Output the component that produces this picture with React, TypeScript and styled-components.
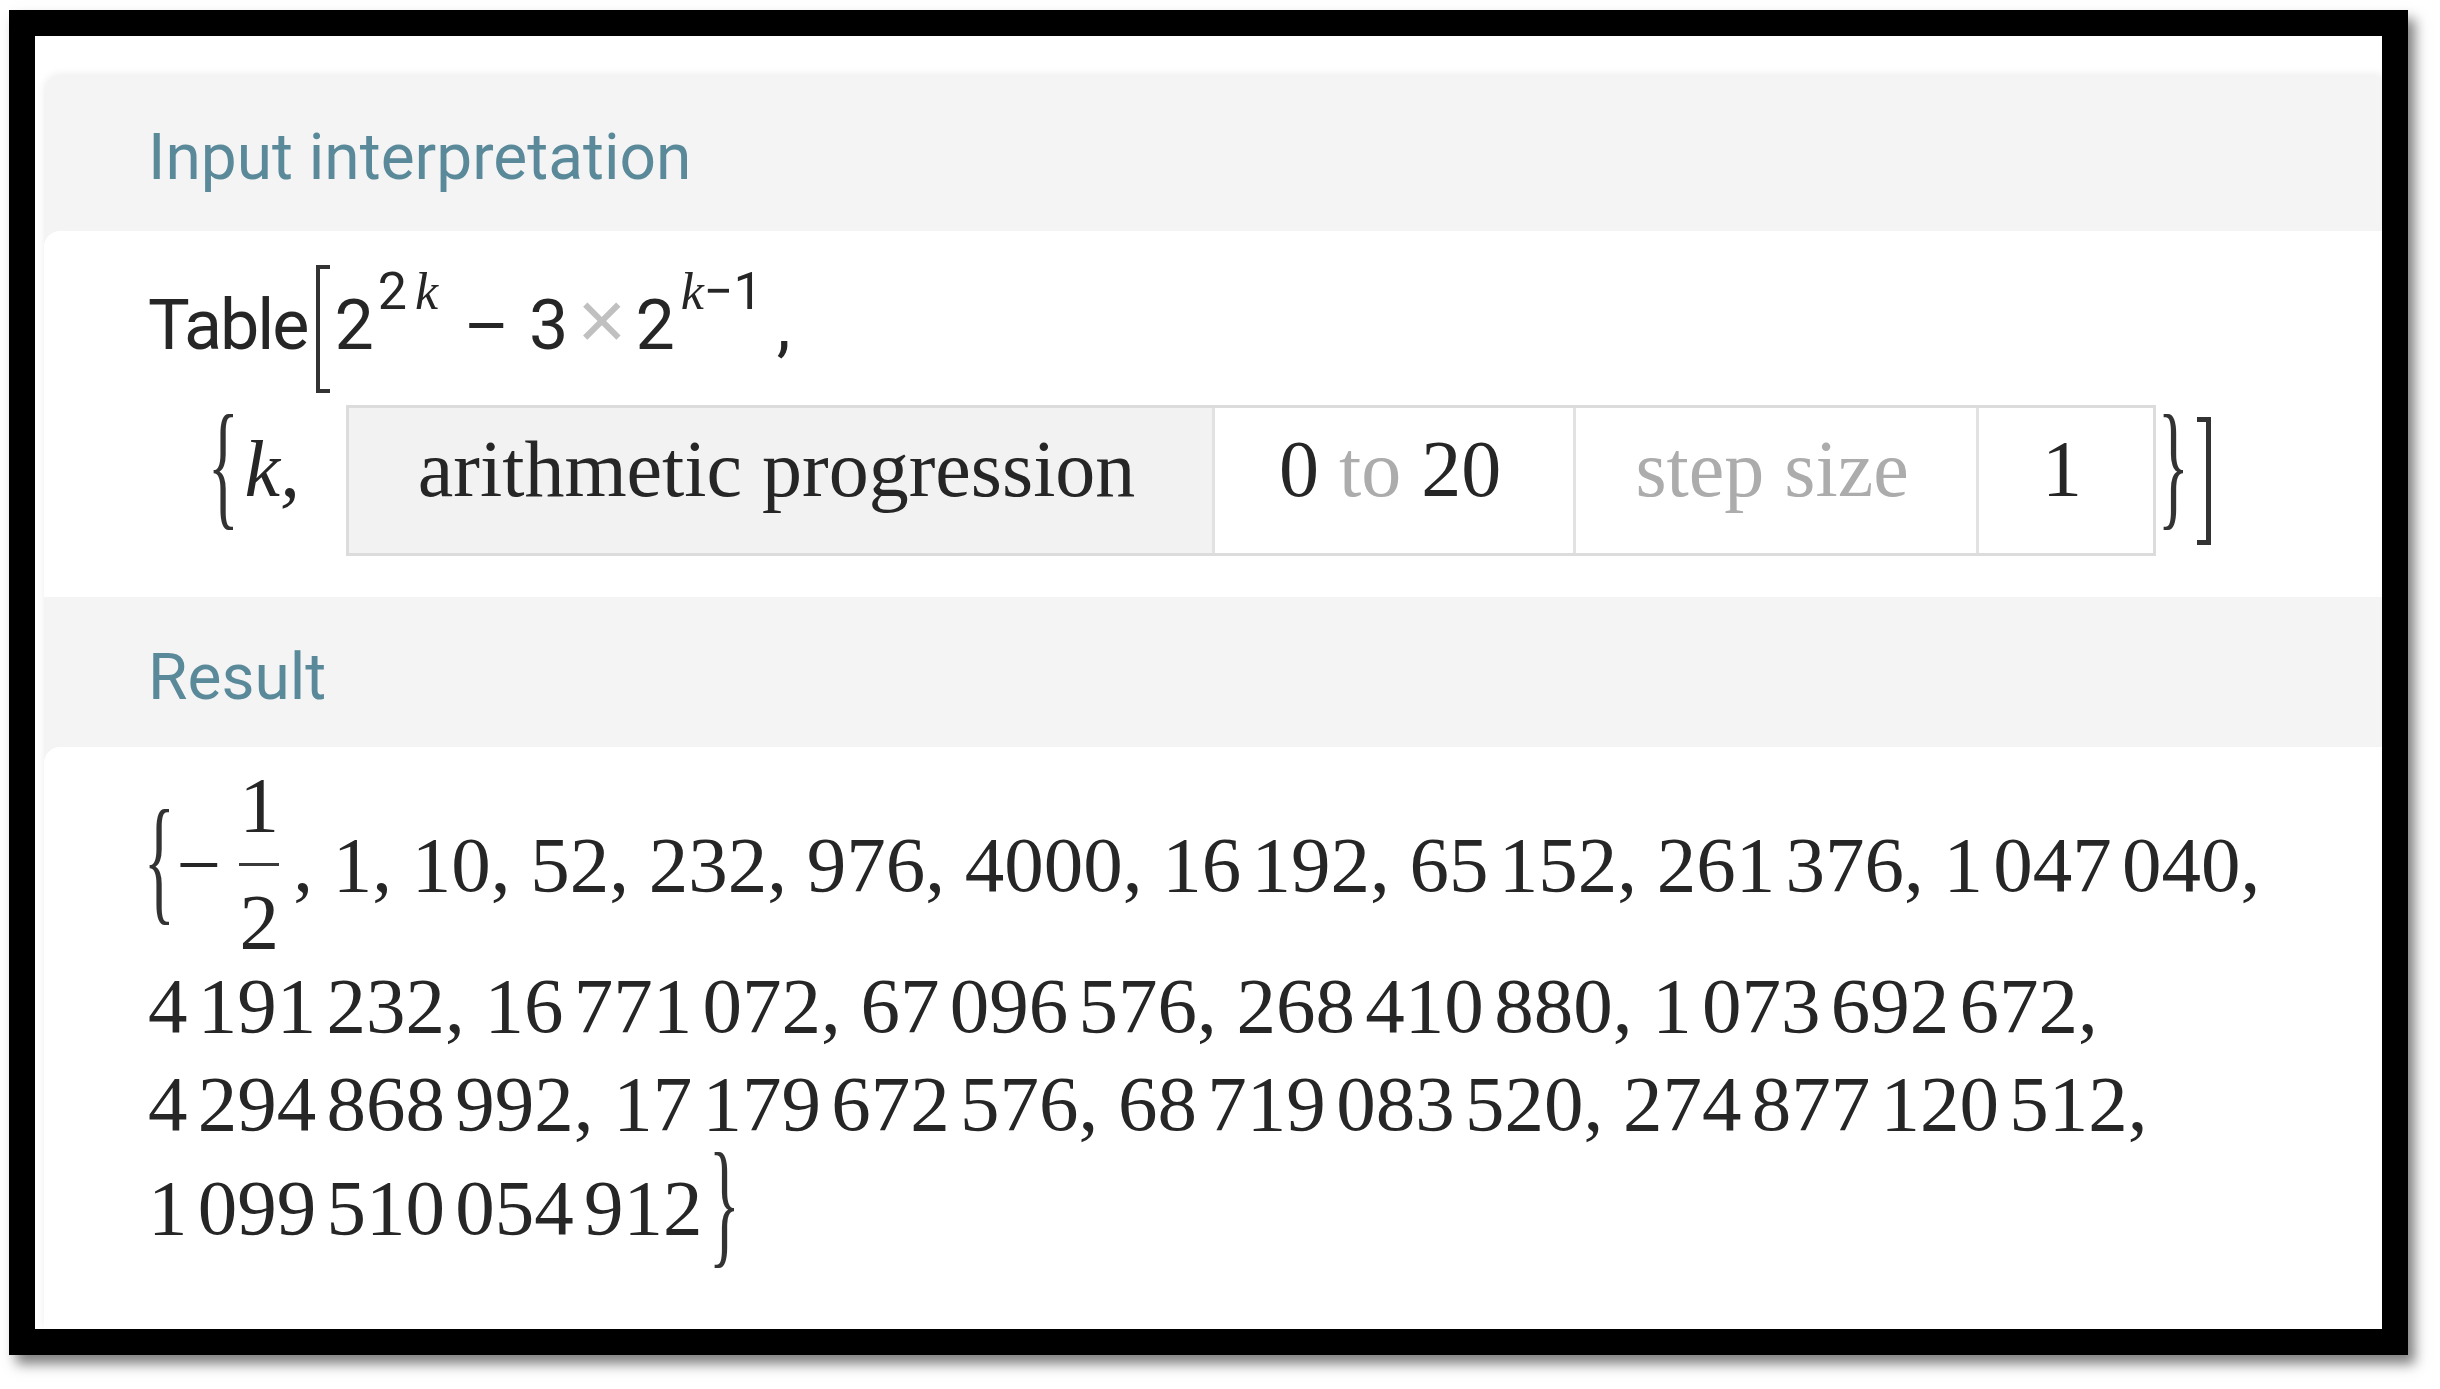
import React from "react"
import styled, { createGlobalStyle } from "styled-components"

const SERIF = `"Liberation Serif", "Times New Roman", serif`
const SANS = `Roboto, "Liberation Sans", Arial, sans-serif`
const ARIAL = `"Liberation Sans", Arial, sans-serif`
const INK = "#262626"

const GlobalStyle = createGlobalStyle`
    html, body {
        margin: 0;
        padding: 0;
        background: #fff;
    }
    body {
        font-family: ${SANS};
        color: ${INK};
    }
`

const Stage = styled.div`
    width: 2440px;
    height: 1389px;
    box-sizing: border-box;
    padding: 10px 0 0 9px;
    background: #fff;
`

const Frame = styled.div`
    width: 2399px;
    height: 1345px;
    box-sizing: border-box;
    border: 26px solid #000;
    box-shadow: 7px 9px 12px rgba(0, 0, 0, 0.5);
    background: #fff;
    overflow: hidden;
    padding: 41px 0 0 9px;
`

const PodStack = styled.div`
    display: flex;
    flex-direction: column;
    height: 100%;
    background: #f4f4f4;
    border-radius: 16px 0 0 0;
    box-shadow: 0 -3px 8px rgba(0, 0, 0, 0.07);
`

const PodHeader = styled.h2<{ $height: number }>`
    margin: 0;
    height: ${p => p.$height}px;
    box-sizing: border-box;
    padding: 49px 0 0 104px;
    font-family: ${SANS};
    font-weight: 400;
    font-size: 64px;
    line-height: 1;
    color: #5a8a9a;
`

const PodBody = styled.div<{ $height?: number; $top: number }>`
    background: #fff;
    border-radius: 16px 0 0 0;
    padding: ${p => p.$top}px 0 0 104px;
    box-sizing: border-box;
    ${p => (p.$height ? `height: ${p.$height}px;` : "flex: 1;")}
`

/* --- pieces of the typeset formulas --- */

const Piece = styled.span<{ $ml?: number }>`
    margin-left: ${p => p.$ml ?? 0}px;
`

const Word = styled(Piece)`
    font-family: ${SANS};
    letter-spacing: -2px;
`

const Ital = styled(Piece)`
    font-family: ${SERIF};
    font-style: italic;
`

const Minus = styled(Piece)`
    font-family: ${ARIAL};
`

const Times = styled(Piece)`
    font-family: ${ARIAL};
    font-size: 84px;
    color: #c0c0c0;
`

const Sup = styled(Piece)`
    font-size: 52px;
    line-height: 1;
    vertical-align: 40px;
`

const SquareBracket = styled.span<{ $side: "left" | "right"; $stroke: number; $ml?: number }>`
    display: inline-block;
    width: 14px;
    height: 128px;
    box-sizing: border-box;
    margin-left: ${p => p.$ml ?? 0}px;
    border: ${p => p.$stroke}px solid #333;
    border-${p => (p.$side === "left" ? "right" : "left")}: none;
    vertical-align: -44px;
    align-self: center;
`

// stretched curly brace, scaled around its own centre so it stays on the math axis
const Brace = styled.span<{ $ml?: number }>`
    display: inline-block;
    margin-left: ${p => p.$ml ?? 0}px;
    font-family: ${SERIF};
    font-size: 72px;
    line-height: 1;
    font-weight: 400;
    color: #333;
    transform-origin: 50% 62%;
    transform: scale(0.9, 1.95);
`

const FormulaLine = styled.div`
    font-family: ${SANS};
    font-size: 70px;
    line-height: 1;
    white-space: nowrap;
    color: ${INK};
`

const ParamRow = styled.div`
    display: flex;
    align-items: baseline;
    margin-top: 12px;
    font-family: ${SERIF};
    font-size: 80px;
    line-height: 1;
    white-space: nowrap;
`

const ParamBox = styled.div<{ $ml: number }>`
    display: flex;
    margin-left: ${p => p.$ml}px;
    border: 3px solid #dcdcdc;
`

const ParamCell = styled.div<{ $width: number; $shaded?: boolean }>`
    display: flex;
    justify-content: center;
    width: ${p => p.$width}px;
    height: 145px;
    box-sizing: border-box;
    padding: 21px 8px 0 0;
    background: ${p => (p.$shaded ? "#f2f2f2" : "#fff")};
    & + & {
        border-left: 3px solid #e2e2e2;
    }
`

const Faint = styled.span`
    color: #acacac;
`

const ResultLine = styled.div<{ $mt?: number }>`
    margin-top: ${p => p.$mt ?? 0}px;
    font-family: ${SERIF};
    font-size: 79px;
    line-height: 98px;
    white-space: nowrap;
    color: ${INK};
`

const Fraction = styled.span<{ $ml?: number }>`
    display: inline-flex;
    flex-direction: column;
    align-items: center;
    margin-left: ${p => p.$ml ?? 0}px;
    vertical-align: 60px;
    line-height: 1;
`

const FracPart = styled.span<{ $mt?: number }>`
    margin-top: ${p => p.$mt ?? 0}px;
`

const FracBar = styled.span`
    display: block;
    width: 40px;
    height: 3px;
    margin-top: 19px;
    background: #3a3a3a;
`

// digit groups of long integers sit a thin gap apart
const Group = styled.span<{ $first: boolean }>`
    margin-left: ${p => (p.$first ? "0" : "0.13em")};
`

function Num({ v }: { v: string }) {
    if (v.length <= 4) return <>{v}</>
    const groups: string[] = []
    for (let i = v.length; i > 0; i -= 3) groups.unshift(v.slice(Math.max(0, i - 3), i))
    return (
        <>
            {groups.map((g, i) => (
                <Group key={i} $first={i === 0}>{g}</Group>
            ))}
        </>
    )
}

function Items({ values, lead }: { values: string[]; lead?: boolean }) {
    return (
        <>
            {values.map((v, i) => (
                <React.Fragment key={v}>
                    {(lead || i > 0) && " "}
                    <Num v={v} />,
                </React.Fragment>
            ))}
        </>
    )
}

const firstRow = ["1", "10", "52", "232", "976", "4000", "16192", "65152", "261376", "1047040"]
const secondRow = ["4191232", "16771072", "67096576", "268410880", "1073692672"]
const thirdRow = ["4294868992", "17179672576", "68719083520", "274877120512"]

export default function App() {
    return (
        <>
            <GlobalStyle />
            <Stage>
                <Frame>
                    <PodStack>
                        <PodHeader $height={154}>Input interpretation</PodHeader>
                        <PodBody $height={366} $top={34}>
                            <FormulaLine>
                                <Word>Table</Word>
                                <SquareBracket $side="left" $stroke={4} $ml={9} />
                                <Piece $ml={4}>2</Piece>
                                <Sup $ml={4}>
                                    2<Ital $ml={8}>k</Ital>
                                </Sup>
                                <Minus $ml={28}>−</Minus>
                                <Piece $ml={22}>3</Piece>
                                <Times $ml={9}>×</Times>
                                <Piece $ml={9}>2</Piece>
                                <Sup $ml={6}>
                                    <Ital>k</Ital>−1
                                </Sup>
                                <Piece $ml={14}>,</Piece>
                            </FormulaLine>
                            <ParamRow>
                                <Brace $ml={58}>{"{"}</Brace>
                                <Ital $ml={4}>k,</Ital>
                                <ParamBox $ml={46}>
                                    <ParamCell $width={863} $shaded>arithmetic progression</ParamCell>
                                    <ParamCell $width={361}>
                                        0&nbsp;<Faint>to</Faint>&nbsp;20
                                    </ParamCell>
                                    <ParamCell $width={403}>
                                        <Faint>step size</Faint>
                                    </ParamCell>
                                    <ParamCell $width={177}>1</ParamCell>
                                </ParamBox>
                                <Brace>{"}"}</Brace>
                                <SquareBracket $side="right" $stroke={5} $ml={6} />
                            </ParamRow>
                        </PodBody>
                        <PodHeader $height={150}>Result</PodHeader>
                        <PodBody $top={18}>
                            <ResultLine>
                                <Brace $ml={-6}>{"{"}</Brace>
                                <span>−</span>
                                <Fraction $ml={18}>
                                    <FracPart>1</FracPart>
                                    <FracBar />
                                    <FracPart $mt={16}>2</FracPart>
                                </Fraction>
                                <Piece $ml={14}>,</Piece>
                                <Items values={firstRow} lead />
                            </ResultLine>
                            <ResultLine $mt={-4}>
                                <Items values={secondRow} />
                            </ResultLine>
                            <ResultLine>
                                <Items values={thirdRow} />
                            </ResultLine>
                            <ResultLine $mt={6}>
                                <Num v="1099510054912" />
                                <Brace $ml={4}>{"}"}</Brace>
                            </ResultLine>
                        </PodBody>
                    </PodStack>
                </Frame>
            </Stage>
        </>
    )
}
